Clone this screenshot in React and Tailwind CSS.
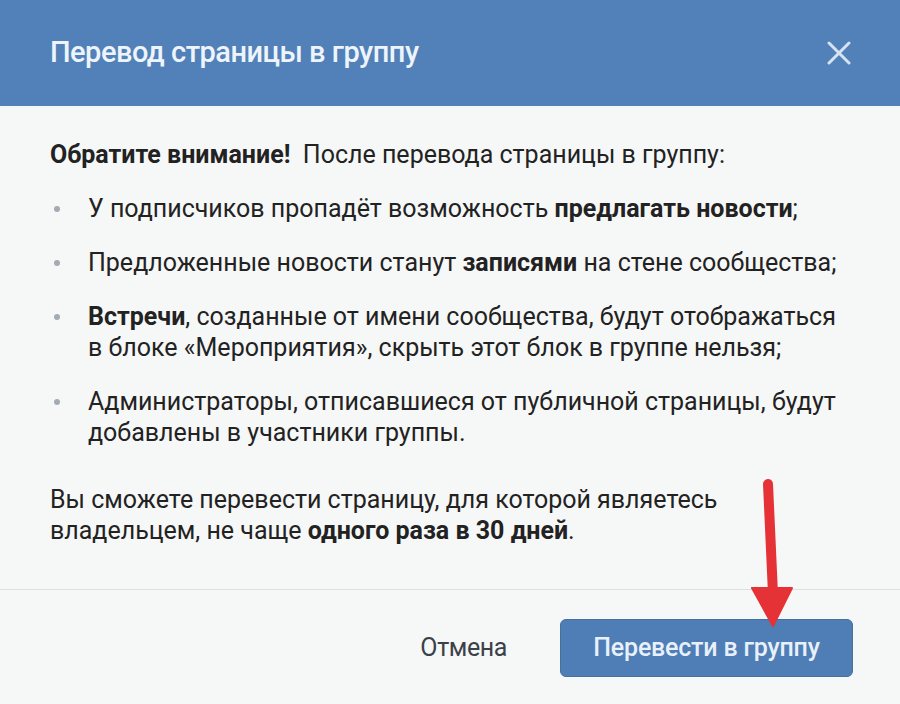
import React from 'react';

function Bullet({ children }) {
    return (
        <li className="flex items-start">
            <span className="w-[38px] shrink-0 pt-[13px] pl-[4px]">
                <span className="block w-[6px] h-[6px] rounded-full bg-[#a3abb3]" />
            </span>
            <span>{children}</span>
        </li>
    );
}

export default function App() {
    return (
        <div className="relative w-[900px] h-[704px] overflow-hidden bg-[#f6f7f7] font-['Roboto',sans-serif]">
            {/* шапка */}
            <div className="h-[106px] bg-[#5181b8] flex items-center justify-between pl-[50px] pr-[50px]">
                <h1 className="text-[29px] font-medium text-[#eef4fb] tracking-[-0.5px]">
                    Перевод страницы в группу
                </h1>
                <svg width="24" height="24" viewBox="0 0 24 24" className="mr-[-1px]">
                    <path d="M2 2 L22 22 M22 2 L2 22" stroke="#d6e4f2" strokeWidth="3" strokeLinecap="round" />
                </svg>
            </div>

            {/* текст */}
            <div className="h-[483px] pl-[50px] pr-[20px] pt-[33px] text-[25px] leading-[31px] text-[#222]">
                <p className="whitespace-nowrap">
                    <b className="font-bold">Обратите внимание!</b>&nbsp; После перевода страницы в группу:
                </p>
                <ul className="mt-[23px] flex flex-col gap-[23px] whitespace-nowrap">
                    <Bullet>
                        У подписчиков пропадёт возможность <b className="font-bold">предлагать новости</b>;
                    </Bullet>
                    <Bullet>
                        Предложенные новости станут <b className="font-bold">записями</b> на стене сообщества;
                    </Bullet>
                    <Bullet>
                        <b className="font-bold">Встречи</b>, созданные от имени сообщества, будут отображаться
                        <br />в блоке «Мероприятия», скрыть этот блок в группе нельзя;
                    </Bullet>
                    <Bullet>
                        Администраторы, отписавшиеся от публичной страницы, будут
                        <br />добавлены в участники группы.
                    </Bullet>
                </ul>
                <p className="mt-[36px] whitespace-nowrap">
                    Вы сможете перевести страницу, для которой являетесь
                    <br />владельцем, не чаще <b className="font-bold">одного раза в 30 дней</b>.
                </p>
            </div>

            {/* подвал */}
            <div className="border-t border-[#dcdfe3] h-[115px] flex items-center justify-end pr-[47px] pt-[1px]">
                <button className="text-[25px] text-[#3b4148] tracking-[-0.4px] mr-[53px]">Отмена</button>
                <button className="w-[293px] h-[58px] rounded-[6px] bg-[#4f7db5] border border-[#46709f] text-[25px] font-medium text-[#e8f0fa] tracking-[-0.2px]">
                    Перевести в группу
                </button>
            </div>

            {/* стрелка */}
            <svg className="absolute left-[740px] top-[470px]" width="70" height="165" viewBox="0 0 70 165">
                <path d="M28 14 L33 124" stroke="#e53236" strokeWidth="10" strokeLinecap="round" />
                <path d="M12 118 L52 118 L33 156 Z" fill="#e53236" stroke="#e53236" strokeWidth="2" strokeLinejoin="round" />
            </svg>
        </div>
    );
}
